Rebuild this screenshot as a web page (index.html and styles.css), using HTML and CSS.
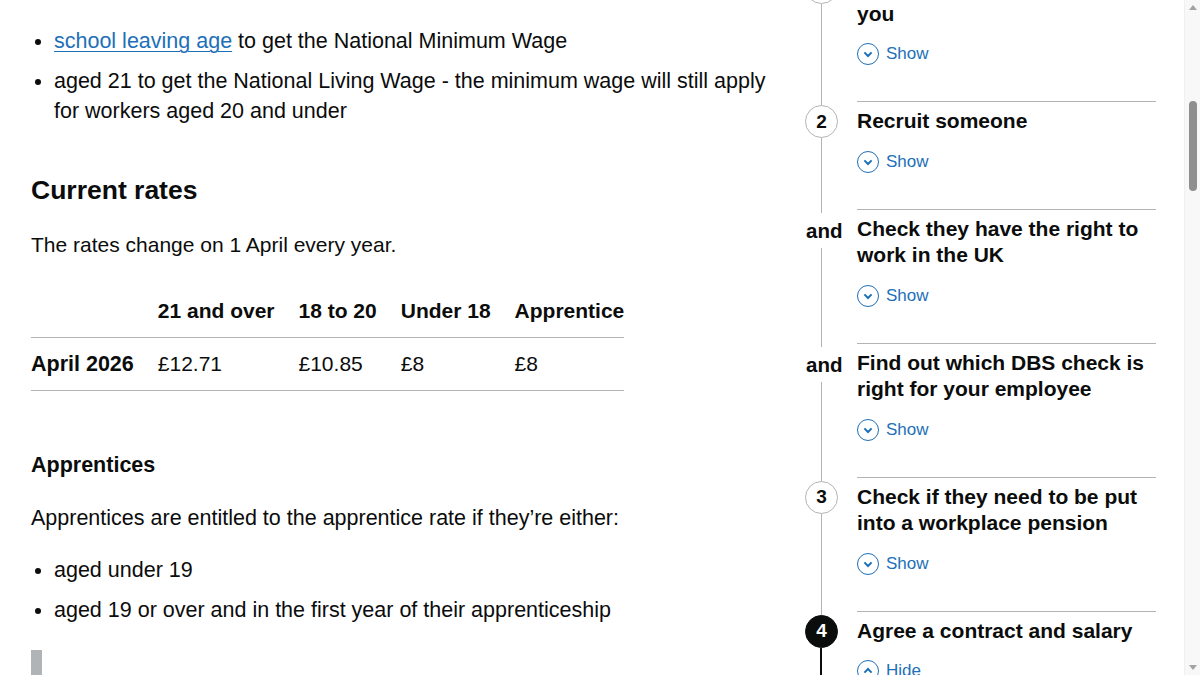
FILE: index.html
```html
<!DOCTYPE html>
<html lang="en">
<head>
    <meta charset="UTF-8">
    <meta name="viewport" content="width=device-width, initial-scale=1.0">
    <title>National Minimum Wage and National Living Wage rates</title>
    <link rel="stylesheet" href="styles.css">
</head>
<body>
    <div class="page">
        <main class="content">
            <ul class="list">
                <li><a href="#">school leaving age</a> to get the National Minimum Wage</li>
                <li>aged 21 to get the National Living Wage - the minimum wage will still apply for workers aged 20 and under</li>
            </ul>

            <h2 class="heading-m">Current rates</h2>
            <p class="body">The rates change on 1 April every year.</p>

            <table class="rates">
                <thead>
                    <tr>
                        <th></th>
                        <th>21 and over</th>
                        <th>18 to 20</th>
                        <th>Under 18</th>
                        <th>Apprentice</th>
                    </tr>
                </thead>
                <tbody>
                    <tr>
                        <th>April 2026</th>
                        <td>£12.71</td>
                        <td>£10.85</td>
                        <td>£8</td>
                        <td>£8</td>
                    </tr>
                </tbody>
            </table>

            <h3 class="heading-s">Apprentices</h3>
            <p class="body body-tight">Apprentices are entitled to the apprentice rate if they’re either:</p>
            <ul class="list list-last">
                <li>aged under 19</li>
                <li>aged 19 or over and in the first year of their apprenticeship</li>
            </ul>

            <div class="inset">&nbsp;</div>
        </main>

        <aside class="step-nav">
            <div class="step">
                <div class="step-rail">
                    <span class="rail-top"></span>
                    <span class="step-num">1</span>
                    <span class="rail"></span>
                </div>
                <div class="step-body">
                    <h3 class="step-title">Check what hiring means for you</h3>
                    <button class="toggle">
                        <svg width="22" height="22" viewBox="0 0 22 22"><circle cx="11" cy="11" r="10.5" fill="none" stroke="#1d70b8" stroke-width="1"/><path d="M7.4 9.4 L11 13 L14.6 9.4" fill="none" stroke="#1d70b8" stroke-width="2"/></svg>
                        Show
                    </button>
                </div>
            </div>

            <div class="step">
                <div class="step-rail">
                    <span class="rail-top"></span>
                    <span class="step-num">2</span>
                    <span class="rail"></span>
                </div>
                <div class="step-body">
                    <h3 class="step-title">Recruit someone</h3>
                    <button class="toggle">
                        <svg width="22" height="22" viewBox="0 0 22 22"><circle cx="11" cy="11" r="10.5" fill="none" stroke="#1d70b8" stroke-width="1"/><path d="M7.4 9.4 L11 13 L14.6 9.4" fill="none" stroke="#1d70b8" stroke-width="2"/></svg>
                        Show
                    </button>
                </div>
            </div>

            <div class="step">
                <div class="step-rail">
                    <span class="rail-top"></span>
                    <span class="step-and">and</span>
                    <span class="rail"></span>
                </div>
                <div class="step-body">
                    <h3 class="step-title">Check they have the right to work in the UK</h3>
                    <button class="toggle">
                        <svg width="22" height="22" viewBox="0 0 22 22"><circle cx="11" cy="11" r="10.5" fill="none" stroke="#1d70b8" stroke-width="1"/><path d="M7.4 9.4 L11 13 L14.6 9.4" fill="none" stroke="#1d70b8" stroke-width="2"/></svg>
                        Show
                    </button>
                </div>
            </div>

            <div class="step">
                <div class="step-rail">
                    <span class="rail-top"></span>
                    <span class="step-and">and</span>
                    <span class="rail"></span>
                </div>
                <div class="step-body">
                    <h3 class="step-title">Find out which DBS check is right for your employee</h3>
                    <button class="toggle">
                        <svg width="22" height="22" viewBox="0 0 22 22"><circle cx="11" cy="11" r="10.5" fill="none" stroke="#1d70b8" stroke-width="1"/><path d="M7.4 9.4 L11 13 L14.6 9.4" fill="none" stroke="#1d70b8" stroke-width="2"/></svg>
                        Show
                    </button>
                </div>
            </div>

            <div class="step">
                <div class="step-rail">
                    <span class="rail-top"></span>
                    <span class="step-num">3</span>
                    <span class="rail"></span>
                </div>
                <div class="step-body">
                    <h3 class="step-title">Check if they need to be put into a workplace pension</h3>
                    <button class="toggle">
                        <svg width="22" height="22" viewBox="0 0 22 22"><circle cx="11" cy="11" r="10.5" fill="none" stroke="#1d70b8" stroke-width="1"/><path d="M7.4 9.4 L11 13 L14.6 9.4" fill="none" stroke="#1d70b8" stroke-width="2"/></svg>
                        Show
                    </button>
                </div>
            </div>

            <div class="step step-active">
                <div class="step-rail">
                    <span class="rail-top"></span>
                    <span class="step-num">4</span>
                    <span class="rail"></span>
                </div>
                <div class="step-body">
                    <h3 class="step-title">Agree a contract and salary</h3>
                    <button class="toggle">
                        <svg width="22" height="22" viewBox="0 0 22 22"><circle cx="11" cy="11" r="10.5" fill="none" stroke="#1d70b8" stroke-width="1"/><path d="M7.4 12.6 L11 9 L14.6 12.6" fill="none" stroke="#1d70b8" stroke-width="2"/></svg>
                        Hide
                    </button>
                </div>
            </div>
        </aside>
    </div>

    <div class="scrollbar">
        <span class="arrow-up"></span>
        <div class="track">
            <span class="thumb"></span>
        </div>
        <span class="arrow-down"></span>
    </div>
</body>
</html>
```

FILE: styles.css
```css
body {
    margin: 0;
    height: 100vh;
    overflow: hidden;
    display: flex;
    font-family: "Liberation Sans", Arial, sans-serif;
    color: #0b0c0c;
    background: white;
}

.page {
    flex: 1;
    display: flex;
    align-items: flex-start;
}

/* main column */

.content {
    width: 745px;
    padding-left: 31px;
    flex-shrink: 0;
}

.list {
    margin: 26px 0 47px;
    padding-left: 23px;
    font-size: 21.5px;
    line-height: 30px;
}

.list li {
    margin-bottom: 10px;
}

.list li:last-child {
    margin-bottom: 0;
}

.list-last {
    margin: 0 0 25px;
}

a {
    color: #1d70b8;
    text-decoration: underline;
    text-decoration-thickness: 1px;
    text-underline-offset: 3px;
}

.heading-m {
    margin: 0 0 23px;
    font-size: 26.5px;
    line-height: 34px;
    font-weight: bold;
}

.heading-s {
    margin: 0 0 23px;
    font-size: 21.5px;
    line-height: 30px;
    font-weight: bold;
}

.body {
    margin: 0 0 25px;
    font-size: 21px;
    line-height: 30px;
}

.body-tight {
    margin-bottom: 22px;
    font-size: 21.5px;
}

.rates {
    border-collapse: collapse;
    margin-bottom: 59px;
    font-size: 21px;
}

.rates th,
.rates td {
    padding: 12px 24px 12px 0;
    line-height: 28px;
    text-align: left;
    border-bottom: 1px solid #b1b4b6;
}

.rates th {
    font-weight: bold;
}

.rates tbody th {
    font-size: 21.5px;
}

.rates tr > :last-child {
    padding-right: 0;
}

.inset {
    border-left: 11px solid #b1b4b6;
    height: 60px;
}

/* step by step navigation */

.step-nav {
    width: 351px;
    margin-left: 29px;
    margin-top: -33px;
    flex-shrink: 0;
}

.step {
    display: grid;
    grid-template-columns: 52px 1fr;
}

.step-rail {
    display: flex;
    flex-direction: column;
}

.rail-top,
.rail {
    width: 1px;
    margin-left: 16px;
    background: #b1b4b6;
}

.rail-top {
    height: 4px;
}

.rail {
    flex: 1;
}

.step-num {
    width: 31px;
    height: 31px;
    border: 1px solid #b1b4b6;
    border-radius: 50%;
    background: white;
    display: flex;
    align-items: center;
    justify-content: center;
    font-size: 19px;
    font-weight: bold;
}

.step-and {
    height: 35px;
    line-height: 35px;
    font-size: 20.5px;
    font-weight: bold;
    margin-left: 1px;
}

.step-active .step-num {
    background: #0b0c0c;
    border-color: #0b0c0c;
    color: white;
}

.step-active .rail {
    width: 2px;
    margin-left: 15px;
    background: #0b0c0c;
}

.step-body {
    border-top: 1px solid #b1b4b6;
    padding: 6px 0 35px;
}

.step-title {
    margin: 0;
    font-size: 21px;
    line-height: 26.5px;
    font-weight: bold;
}

.toggle {
    margin-top: 15px;
    padding: 0;
    border: none;
    background: none;
    height: 24px;
    display: flex;
    align-items: center;
    gap: 7px;
    font-family: inherit;
    font-size: 17px;
    color: #1d70b8;
    cursor: pointer;
}

/* window scrollbar */

.scrollbar {
    width: 15px;
    margin-left: 2px;
    background: #f8f8f8;
    border-left: 1px solid #f0f0f0;
    display: flex;
    flex-direction: column;
    align-items: center;
}

.arrow-up,
.arrow-down {
    width: 0;
    height: 0;
    border-left: 4px solid transparent;
    border-right: 4px solid transparent;
    margin: 5px 0;
}

.arrow-up {
    border-bottom: 5px solid #a3a3a3;
}

.arrow-down {
    border-top: 5px solid #a3a3a3;
}

.track {
    flex: 1;
    width: 100%;
    display: flex;
    justify-content: center;
}

.thumb {
    width: 8px;
    height: 90px;
    margin-top: 86px;
    border-radius: 4px;
    background: #8f8f8f;
}
```
